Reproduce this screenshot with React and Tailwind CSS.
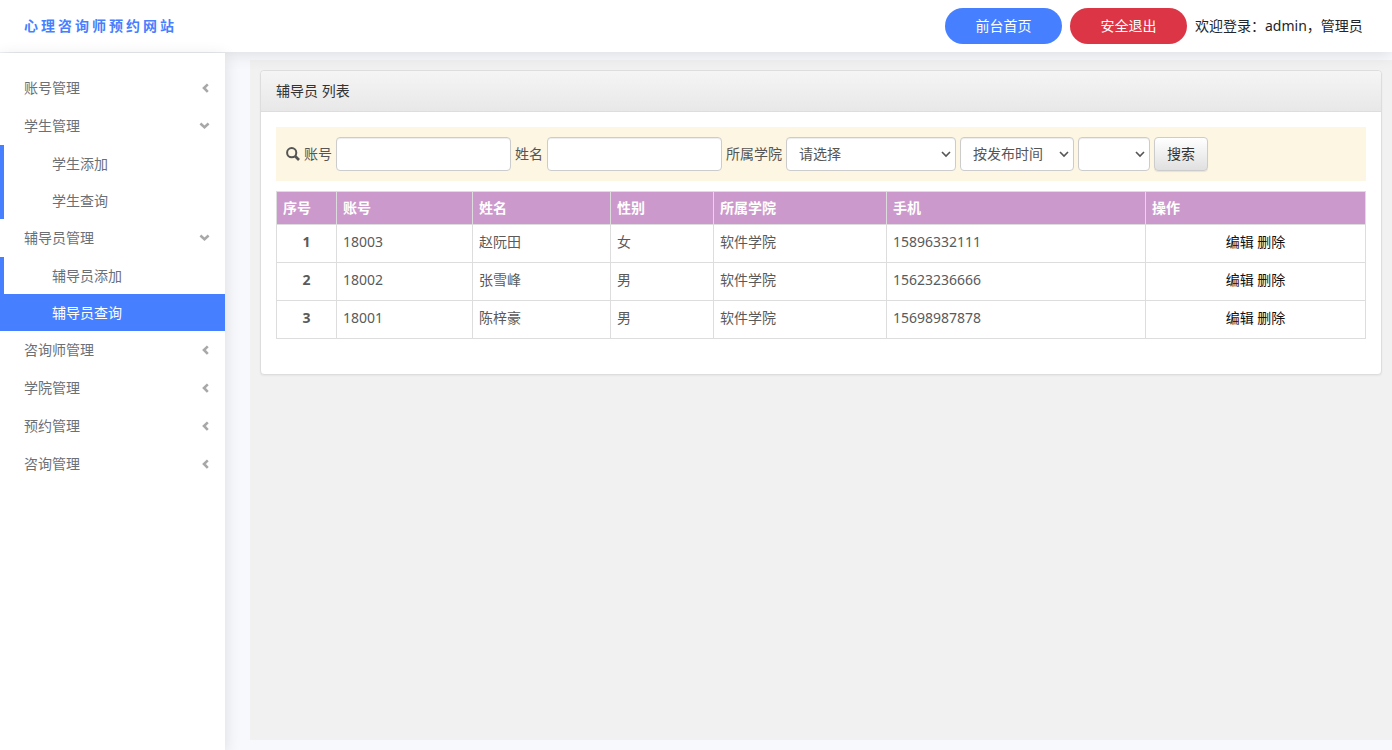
import { useState } from "react";

const menus = [
  { name: "账号管理", items: ["管理员添加", "管理员查询"] },
  { name: "学生管理", items: ["学生添加", "学生查询"] },
  { name: "辅导员管理", items: ["辅导员添加", "辅导员查询"] },
  { name: "咨询师管理", items: ["咨询师添加", "咨询师查询"] },
  { name: "学院管理", items: ["学院添加", "学院查询"] },
  { name: "预约管理", items: ["预约查询"] },
  { name: "咨询管理", items: ["咨询查询"] },
];

const rows = [
  { account: "18003", name: "赵阮田", sex: "女", college: "软件学院", phone: "15896332111" },
  { account: "18002", name: "张雪峰", sex: "男", college: "软件学院", phone: "15623236666" },
  { account: "18001", name: "陈梓豪", sex: "男", college: "软件学院", phone: "15698987878" },
];

const field =
  "h-[34px] rounded border border-[#ccc] bg-white px-3 text-[#555] shadow-[inset_0_1px_1px_rgba(0,0,0,0.075)]";

function Arrow({ open }) {
  return (
    <svg
      width="11"
      height="11"
      viewBox="0 0 11 11"
      fill="none"
      stroke="#a8a8a8"
      strokeWidth="2.6"
      aria-hidden="true"
    >
      {open ? <path d="M1.4 2.6 L5.5 6.2 L9.6 2.6" /> : <path d="M8.8 1.4 L5 5 L8.8 8.8" />}
    </svg>
  );
}

function SearchIcon() {
  return (
    <svg width="14" height="14" viewBox="0 0 14 14" fill="none" stroke="#555" aria-hidden="true">
      <circle cx="5.7" cy="5.7" r="4.6" strokeWidth="2" />
      <path d="M9 9 L13 13" strokeWidth="2.6" />
    </svg>
  );
}

// select with a thin arrow over its right end
function Select({ className, children, ...props }) {
  return (
    <div className={`relative ${className}`}>
      <select {...props} className={`${field} w-full appearance-none`}>
        {children}
      </select>
      <svg
        className="pointer-events-none absolute top-3 right-[5px]"
        width="10"
        height="10"
        viewBox="0 0 10 10"
        fill="none"
        stroke="#555"
        strokeWidth="1.6"
        aria-hidden="true"
      >
        <path d="M1 3 L5 7 L9 3" />
      </svg>
    </div>
  );
}

function Header() {
  return (
    <header className="relative flex h-[52px] items-center justify-between bg-white px-6 shadow-[0_2px_16px_rgba(0,0,0,0.12)]">
      <a href="#" className="font-bold tracking-[3px] text-[#467fff]">
        心理咨询师预约网站
      </a>
      <div className="flex items-center gap-2 text-[#212529]">
        <button className="h-9 w-[117px] rounded-full bg-[#467fff] text-white">前台首页</button>
        <button className="h-9 w-[117px] rounded-full bg-[#dc3545] text-white">安全退出</button>
        <span className="min-w-[173px]">欢迎登录：admin，管理员</span>
      </div>
    </header>
  );
}

function Sidebar() {
  const [open, setOpen] = useState(["学生管理", "辅导员管理"]);
  const [active, setActive] = useState("辅导员查询");

  const toggle = (name) => {
    setOpen(open.includes(name) ? open.filter((n) => n !== name) : [...open, name]);
  };

  return (
    <nav className="relative mt-px w-[225px] shrink-0 bg-white pt-4 text-[#6b6f76] shadow-[0_4px_16px_rgba(0,0,0,0.12)]">
      {menus.map((menu) => (
        <div key={menu.name}>
          <button
            onClick={() => toggle(menu.name)}
            aria-expanded={open.includes(menu.name)}
            className="flex h-[38px] w-full items-center justify-between pr-[15px] pl-6"
          >
            {menu.name}
            <Arrow open={open.includes(menu.name)} />
          </button>
          {open.includes(menu.name) &&
            menu.items.map((item) => (
              <a
                key={item}
                href="#"
                onClick={() => setActive(item)}
                className={
                  active === item
                    ? "flex h-[37px] items-center border-l-4 border-[#467fff] bg-[#467fff] pl-12 text-white"
                    : "flex h-[37px] items-center border-l-4 border-[#467fff] pl-12"
                }
              >
                {item}
              </a>
            ))}
        </div>
      ))}
    </nav>
  );
}

function SearchBar() {
  return (
    <form
      onSubmit={(e) => e.preventDefault()}
      className="flex flex-wrap items-center gap-1 bg-[#fdf6e3] p-2.5 text-[#555]"
    >
      <SearchIcon />
      <label htmlFor="account">账号</label>
      <input id="account" type="text" className={`${field} w-[175px]`} />
      <label htmlFor="name">姓名</label>
      <input id="name" type="text" className={`${field} w-[175px]`} />
      <label htmlFor="college">所属学院</label>
      <Select id="college" className="w-[170px]">
        <option>请选择</option>
        <option>软件学院</option>
      </Select>
      <Select aria-label="排序" className="w-[114px]">
        <option>按发布时间</option>
      </Select>
      <Select aria-label="顺序" className="w-[72px]">
        <option></option>
      </Select>
      <button
        type="submit"
        className="h-[34px] w-[54px] rounded border border-[#ccc] bg-linear-to-b from-white to-[#e0e0e0] text-[#333] shadow-[0_1px_1px_rgba(0,0,0,0.08)]"
      >
        搜索
      </button>
    </form>
  );
}

function UserTable() {
  const th = "border border-[#ddd] px-1.5 py-1.5 text-left font-bold";
  const td = "border border-[#ddd] px-1.5 pt-[7px] pb-2.5";

  return (
    <table className="mt-2.5 mb-5 w-full table-fixed border-collapse leading-5 text-[#5a5a5a]">
      <colgroup>
        <col className="w-[60px]" />
        <col className="w-[136px]" />
        <col className="w-[138px]" />
        <col className="w-[103px]" />
        <col className="w-[173px]" />
        <col className="w-[259px]" />
        <col className="w-[220px]" />
      </colgroup>
      <thead className="bg-[#cb99cc] text-white">
        <tr>
          <th className={th}>序号</th>
          <th className={th}>账号</th>
          <th className={th}>姓名</th>
          <th className={th}>性别</th>
          <th className={th}>所属学院</th>
          <th className={th}>手机</th>
          <th className={th}>操作</th>
        </tr>
      </thead>
      <tbody>
        {rows.map((row, i) => (
          <tr key={row.account}>
            <td className={`${td} text-center font-bold`}>{i + 1}</td>
            <td className={td}>{row.account}</td>
            <td className={td}>{row.name}</td>
            <td className={td}>{row.sex}</td>
            <td className={td}>{row.college}</td>
            <td className={td}>{row.phone}</td>
            <td className={`${td} text-center text-[#111]`}>
              <a href="#">编辑</a> <a href="#">删除</a>
            </td>
          </tr>
        ))}
      </tbody>
    </table>
  );
}

export default function App() {
  return (
    <div className="flex min-h-screen flex-col bg-[#f8f9fc] font-['Noto_Sans','Noto_Sans_CJK_SC',sans-serif] text-sm">
      <Header />
      <div className="flex grow">
        <Sidebar />
        <main className="mt-2 mb-2.5 ml-[25px] min-w-0 grow bg-[#f1f1f1] p-2.5">
          <section className="rounded border border-[#ddd] bg-white shadow-[0_1px_2px_rgba(0,0,0,0.05)]">
            <h1 className="rounded-t border-b border-[#ddd] bg-linear-to-b from-[#f5f5f5] to-[#e8e8e8] px-[15px] py-2.5 text-[#333]">
              辅导员 列表
            </h1>
            <div className="p-[15px]">
              <SearchBar />
              <UserTable />
            </div>
          </section>
        </main>
      </div>
    </div>
  );
}
